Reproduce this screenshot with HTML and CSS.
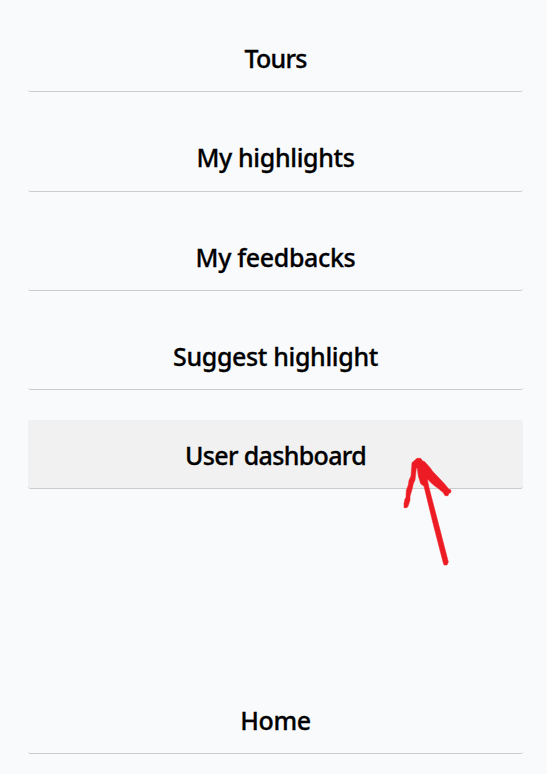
FILE: index.html
```html
<!DOCTYPE html>
<html lang="en">
<head>
<meta charset="utf-8">
<title>Menu</title>
<link rel="stylesheet" href="styles.css">
</head>
<body>
<nav class="menu">
  <a class="item tours"><span>Tours</span></a>
  <a class="item highlights"><span>My highlights</span></a>
  <a class="item feedbacks"><span>My feedbacks</span></a>
  <a class="item suggest"><span>Suggest highlight</span></a>
  <a class="item dashboard active"><span>User dashboard</span></a>
  <a class="item home"><span>Home</span></a>
</nav>
<svg class="arrow" width="80" height="140" viewBox="0 0 240 420" aria-hidden="true">
  <path d="M81 55L92 55L97 62L104 65L121 84L127 93L147 114L164 132L176 147L183 150L182 158L177 160L174 167L165 167L160 158L143 144L128 133L112 117L116 139L145 250L175 366L171 375L162 375L159 366L129 250L102 139L92 131L85 108L82 85L79 84L75 120L70 131L67 145L60 169L60 181L54 199L51 203L42 203L42 190L45 177L48 172L49 151L55 135L57 121L63 108L66 68Z"/>
</svg>
</body>
</html>
```
FILE: styles.css
```css
* {
  box-sizing: border-box;
}

body {
  position: relative;
  height: 774px;
  margin: 0;
  overflow: hidden;
  background: #f9fafc;
  font-family: "Noto Sans", "Open Sans", sans-serif;
}

.menu {
  display: flex;
  flex-direction: column;
  gap: 30px;
  padding: 23px 24px 0 28px;
}

.item {
  display: flex;
  flex: none;
  align-items: center;
  justify-content: center;
  height: 69px;
  padding-top: 1px;
  border-bottom: 1px solid #c8cacc;
  border-radius: 3px;
  color: #000;
  font-size: 25px;
  font-weight: 500;
  line-height: 34px;
  letter-spacing: -0.35px;
  white-space: nowrap;
  -webkit-text-stroke: 0.3px #000;
}

.tours {
  letter-spacing: -0.75px;
}

.highlights {
  margin-top: 1px;
  padding: 0 0 1px;
}

.dashboard {
  letter-spacing: -0.65px;
}

.active {
  background: #f1f1f1;
}

.home {
  margin-top: 166px;
}

.arrow {
  position: absolute;
  top: 440px;
  left: 390px;
  fill: #ed1c24;
  stroke: #ed1c24;
  stroke-width: 1.5;
}
```
